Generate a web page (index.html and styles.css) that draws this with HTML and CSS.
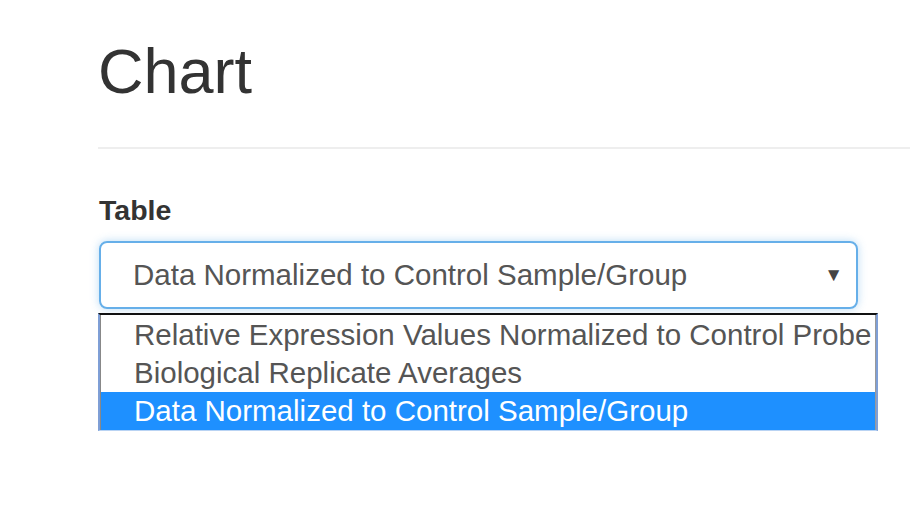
FILE: index.html
```html
<!DOCTYPE html>
<html>
<head>
<meta charset="utf-8">
<link rel="stylesheet" href="styles.css">
</head>
<body>
<div class="page">
  <h1 class="title">Chart</h1>
  <div class="rule"></div>
  <div class="field">
    <div class="label">Table</div>
    <div class="select">
      <span class="value">Data Normalized to Control Sample/Group</span>
      <span class="arrow">▼</span>
    </div>
    <div class="list-wrap">
      <ul class="list">
        <li class="opt">Relative Expression Values Normalized to Control Probe</li>
        <li class="opt">Biological Replicate Averages</li>
        <li class="opt selected">Data Normalized to Control Sample/Group</li>
      </ul>
    </div>
  </div>
</div>
</body>
</html>
```
FILE: styles.css
```css
html, body {
  margin: 0;
  padding: 0;
  background: #fff;
}
body {
  font-family: "Liberation Sans", Arial, sans-serif;
  color: #333;
  overflow: hidden;
}
.page {
  padding-left: 98px;
  padding-top: 31px;
}
.title {
  margin: 0;
  font-weight: normal;
  font-size: 63px;
  line-height: 80px;
  color: #333;
}
.rule {
  height: 2px;
  background: #eee;
  margin-top: 36px;
}
.field {
  margin-top: 44px;
}
.label {
  font-weight: bold;
  font-size: 28.5px;
  line-height: 34px;
  padding-left: 1px;
  color: #333;
}
.select {
  margin-top: 14px;
  width: 759px;
  margin-left: 1px;
  border: 2px solid #66afe9;
  border-radius: 8px;
  box-shadow: 0 0 8px rgba(102, 175, 233, 0.45);
  display: flex;
  align-items: center;
  justify-content: space-between;
  padding: 0 13px 0 32px;
  box-sizing: border-box;
  height: 68px;
  font-size: 29.5px;
  color: #555;
}
.arrow {
  font-size: 19px;
  color: #444;
}
.list-wrap {
  margin-top: 4px;
  width: 780px;
  border-top: 2px solid #111;
  border-left: 2px solid #7f9fd6;
  border-right: 2px solid #7f9fd6;
  border-bottom: 1px solid #b9d3f3;
  box-sizing: border-box;
}
.list {
  list-style: none;
  margin: 0;
  padding: 0;
  border-left: 1px solid #888;
  border-right: 1px solid #999;
  background: #fff;
}
.opt {
  font-size: 29.5px;
  line-height: 38px;
  padding-left: 33px;
  color: #555;
  white-space: nowrap;
  overflow: hidden;
}
.opt:first-child {
  padding-top: 1px;
}
.opt.selected {
  background: #1e90ff;
  color: #fff;
  line-height: 38px;
}
```
